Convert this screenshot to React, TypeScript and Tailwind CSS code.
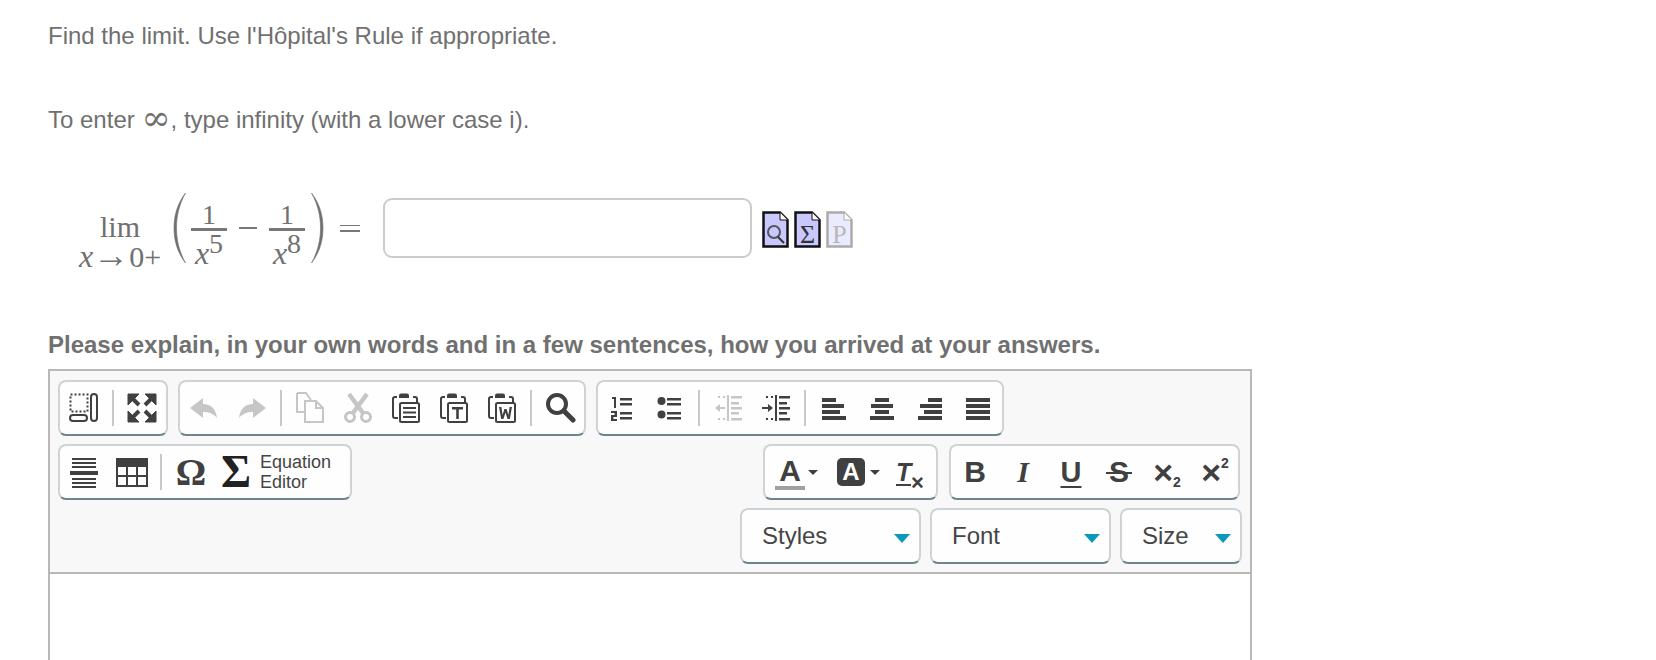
import { ReactNode } from "react";

const DARK = "#404040";
const OFF = "#c6c6c6";

const Svg = ({ children, w = 32, h = 32 }: { children: ReactNode; w?: number; h?: number }) => (
  <svg width={w} height={h} viewBox={`0 0 ${w} ${h}`} className="block">
    {children}
  </svg>
);

const Btn = ({ children }: { children: ReactNode }) => (
  <div className="flex h-full w-12 shrink-0 items-center justify-center">{children}</div>
);

const Sep = () => <div className="mx-1 h-9 w-0.5 shrink-0 bg-[#c8c8c8]" />;

const Group = ({ children, className = "" }: { children: ReactNode; className?: string }) => (
  <div
    className={
      "flex h-[56px] items-center rounded-lg border-2 border-[#cdd3d6] border-b-[#6e848c] bg-[#fefefe] " + className
    }
  >
    {children}
  </div>
);

const Combo = ({ label, width }: { label: string; width: string }) => (
  <div
    className={
      "relative flex h-[56px] items-center rounded-lg border-2 border-[#cdd3d6] border-b-[#6e848c] bg-[#fefefe] pl-[20px] text-[24px] text-[#454545] " +
      width
    }
  >
    {label}
    <div className="absolute right-[9px] top-[24px] h-0 w-0 border-x-[8px] border-t-[9px] border-x-transparent border-t-[#0d98ba]" />
  </div>
);

const ShowSource = () => (
  <Svg>
    <rect x="2.500" y="2.500" width="17" height="17" fill="none" stroke={DARK} strokeWidth="2" strokeDasharray="2 2" />
    <rect x="23" y="2" width="6" height="27" rx="3" fill="none" stroke={DARK} strokeWidth="2" />
    <rect x="2" y="23" width="17" height="6" rx="3" fill="none" stroke={DARK} strokeWidth="2" />
  </Svg>
);

const Maximize = () => (
  <Svg>
    <g fill={DARK} stroke={DARK}>
      <path d="M2 2h11L2 13z" />
      <path d="M30 2H19l11 11z" />
      <path d="M2 30h11L2 19z" />
      <path d="M30 30H19l11-11z" />
    </g>
    <g stroke={DARK} strokeWidth="4">
      <path d="M6 6l7 7M26 6l-7 7M6 26l7-7M26 26l-7-7" />
    </g>
  </Svg>
);

const Undo = ({ flip }: { flip?: boolean }) => (
  <Svg>
    <path
      d="M2 16 L15 6 V12 C23 12 28 17 29 26 C25 21 20 20 15 20 V26 Z"
      fill={OFF}
      transform={flip ? "matrix(-1 0 0 1 32 0)" : undefined}
    />
  </Svg>
);

const Copy = () => (
  <Svg>
    <path d="M3 1h9l5 7M3 1v19h8" fill="none" stroke={OFF} strokeWidth="2" />
    <path d="M11 9h11l7 7v14H11zM22 9v7h7" fill="none" stroke={OFF} strokeWidth="2" />
  </Svg>
);

const Cut = () => (
  <Svg>
    <circle cx="8" cy="25" r="4.500" fill="none" stroke={OFF} strokeWidth="3" />
    <circle cx="24" cy="25" r="4.500" fill="none" stroke={OFF} strokeWidth="3" />
    <path d="M7 2 L21 21 M25 2 L11 21" stroke={OFF} strokeWidth="4.500" />
  </Svg>
);

const Clipboard = ({ children }: { children?: ReactNode }) => (
  <Svg>
    <path d="M7 5H5a2 2 0 0 0-2 2v17a2 2 0 0 0 2 2h3M23 5h2a2 2 0 0 1 2 2v3" fill="none" stroke={DARK} strokeWidth="2" />
    <path d="M9 6V3.500a2 2 0 0 1 2-2h6a2 2 0 0 1 2 2V6z" fill={DARK} />
    <rect x="10" y="11" width="19" height="19" rx="1.500" fill="#fefefe" stroke={DARK} strokeWidth="2" />
    {children}
  </Svg>
);

const PasteIcon = () => (
  <Clipboard>
    <path d="M13 15h13v2H13zM13 19.500h13v2H13zM13 24h13v2H13z" fill={DARK} />
  </Clipboard>
);

const PasteText = () => (
  <Clipboard>
    <path d="M14 15h11v2.600h-4.200V27h-2.600v-9.400H14z" fill={DARK} />
  </Clipboard>
);

const PasteWord = () => (
  <Clipboard>
    <path d="M13 15h2.400l1.200 8 1.800-6h2.200l1.800 6 1.200-8H26l-2.200 12h-2.200l-2.100-6.500-2.100 6.500h-2.200z" fill={DARK} />
  </Clipboard>
);

const Find = () => (
  <Svg>
    <circle cx="13" cy="12" r="9" fill="none" stroke={DARK} strokeWidth="4" />
    <path d="M20 19l9 9" stroke={DARK} strokeWidth="5" strokeLinecap="round" />
  </Svg>
);

const Numbered = () => (
  <Svg>
    <path d="M6 5h4v11H8V7H6zM5 19h6v6H7.400v2H11v2H5v-6h3.600v-2H5z" fill={DARK} />
    <path d="M14 6h12v2.500H14zM14 11h12v2.500H14zM14 20h12v2.500H14zM14 25h12v2.500H14z" fill={DARK} />
  </Svg>
);

const Bullets = () => (
  <Svg>
    <circle cx="7.500" cy="9" r="4" fill={DARK} />
    <circle cx="7.500" cy="22.500" r="4" fill={DARK} />
    <path d="M13 6h14v2.500H13zM13 11h14v2.500H13zM13 20h14v2.500H13zM13 25h14v2.500H13z" fill={DARK} />
  </Svg>
);

const Indent = ({ color, out }: { color: string; out?: boolean }) => (
  <Svg>
    <rect x="15" y="3" width="2" height="26" fill={color} />
    <path d="M19 4h11v2.400H19zM19 10h8v2.400H19zM19 15h11v2.400H19zM19 20h8v2.400H19zM19 26h11v2.400H19z" fill={color} />
    <path d="M6 4h2v2H6zM11 4h2v2h-2zM6 26h2v2H6zM11 26h2v2h-2z" fill={color} />
    {out ? (
      <path d="M3 16l5-4v3h5v2H8v3z" fill={color} />
    ) : (
      <path d="M13 16l-5-4v3H2v2h6v3z" fill={color} />
    )}
  </Svg>
);

const Align = ({ bars }: { bars: [number, number][] }) => (
  <Svg>
    {bars.map(([x, w], i) => (
      <rect key={i} x={x} y={6 + i * 6} width={w} height="4" fill={DARK} />
    ))}
  </Svg>
);

const HLine = () => (
  <Svg>
    <path d="M4 2h24v2H4zM4 6h24v2H4zM4 10h24v2H4zM2 15h28v4H2zM4 22h24v2H4zM4 26h24v2H4zM4 30h24v2H4z" fill={DARK} />
  </Svg>
);

const TableIcon = () => (
  <Svg>
    <rect x="1" y="3" width="30" height="27" fill="none" stroke={DARK} strokeWidth="2" />
    <rect x="1" y="3" width="30" height="8" fill={DARK} />
    <path d="M11 10v20M21 10v20M1 20h30" stroke={DARK} strokeWidth="2" />
  </Svg>
);

const Glyph = ({ children, className }: { children: ReactNode; className: string }) => (
  <span className={"leading-none text-[#404040] font-['Liberation_Sans',sans-serif] " + className}>{children}</span>
);

const Caret = () => <div className="h-0 w-0 border-x-[5px] border-t-[5px] border-x-transparent border-t-[#404040]" />;

const FileIcon = ({ faded, children }: { faded?: boolean; children: ReactNode }) => (
  <svg width="27" height="37" viewBox="0 0 27 37" className={"block" + (faded ? " opacity-35" : "")}>
    <path d="M1.500 1.500H18L25.500 9V35.500H1.500z" fill="#c8c8ff" stroke="#111" strokeWidth="2.500" />
    <path d="M18 1.500V9H25.500" fill="#fff" stroke="#111" strokeWidth="1" />
    {children}
  </svg>
);

const Paren = ({ flip }: { flip?: boolean }) => (
  <svg width="16" height="72" viewBox="0 0 16 72" className={"block" + (flip ? " -scale-x-100" : "")}>
    <path d="M14.500 1C6 12 3 24 3 36s3 24 11.500 35C8 59 5.500 48 5.500 36S8 13 14.500 1z" fill="#707070" stroke="#707070" strokeWidth="0.600" />
  </svg>
);

const Frac = ({ sup }: { sup: string }) => (
  <div className="flex w-9 flex-col items-center pt-[12px]">
    <div className="h-[28px] text-[28px] leading-[30px]">1</div>
    <div className="mb-[4px] h-[3px] w-full bg-[#777]" />
    <div className="h-[34px] whitespace-nowrap leading-[36px]">
      <i className="text-[32px]">x</i>
      <span className="relative -top-[11px] text-[28px]">{sup}</span>
    </div>
  </div>
);

export default function App() {
  return (
    <div className="h-screen overflow-hidden bg-white pl-12 text-[#707070] font-['Liberation_Sans',sans-serif]">
      <p className="pt-[22px] text-[24px] leading-[28px]">Find the limit. Use l'Hôpital's Rule if appropriate.</p>
      <p className="mt-[56px] h-[28px] text-[24px] leading-[28px]">
        To enter{" "}
        <span className="relative top-[2px] font-['DejaVu_Serif',serif] text-[35px] leading-[20px]">∞</span>, type infinity (with a lower case i).
      </p>
      <div className="mt-[54px] flex h-[80px] items-center font-['Liberation_Serif',serif]">
        <div className="ml-[31px] flex w-[82px] flex-col items-center pt-[20px] text-[30px] leading-[26px]">
          <div className="h-[26px]">lim</div>
          <div className="-mt-[3px] h-[26px] whitespace-nowrap">
            <i className="text-[32px]">x</i>
            <span className="text-[36px] leading-none">→</span>0+
          </div>
        </div>
        <div className="ml-[10px]">
          <Paren />
        </div>
        <div className="ml-[4px]">
          <Frac sup="5" />
        </div>
        <div className="mx-[12px] h-[1.500px] w-[18px] bg-[#777]" />
        <Frac sup="8" />
        <div className="ml-[5px]">
          <Paren flip />
        </div>
        <div className="ml-[14px] flex w-[20px] flex-col gap-[4px]">
          <div className="h-[1.500px] bg-[#777]" />
          <div className="h-[1.500px] bg-[#777]" />
        </div>
        <div className="ml-[23px] h-[60px] w-[369px] rounded-[9px] border-2 border-[#cccccc]" />
        <div className="ml-[10px] flex gap-[5px] pt-[3px]">
          <FileIcon>
            <circle cx="12" cy="21" r="6" fill="none" stroke="#555" strokeWidth="2" />
            <path d="M16 26l6 6" stroke="#333" strokeWidth="2" />
          </FileIcon>
          <FileIcon>
            <text x="13.500" y="32" textAnchor="middle" fontSize="26" fill="#333" fontFamily="Liberation Serif, serif">Σ</text>
          </FileIcon>
          <FileIcon faded>
            <text x="13.500" y="32" textAnchor="middle" fontSize="26" fill="#333" fontFamily="Liberation Serif, serif">P</text>
          </FileIcon>
        </div>
      </div>
      <p className="mt-[63px] text-[24px] font-bold leading-[28px]">
        Please explain, in your own words and in a few sentences, how you arrived at your answers.
      </p>
      <div className="mt-[10px] h-[500px] w-[1204px] border-2 border-[#b8b8b8]">
        <div className="border-b-2 border-[#b8b8b8] bg-[#f8f8f8] pb-[8px] pt-[9px]">
          <div className="flex gap-[10px] pl-[8px]">
            <Group>
              <Btn><ShowSource /></Btn>
              <Sep />
              <Btn><Maximize /></Btn>
            </Group>
            <Group>
              <Btn><Undo /></Btn>
              <Btn><Undo flip /></Btn>
              <Sep />
              <Btn><Copy /></Btn>
              <Btn><Cut /></Btn>
              <Btn><PasteIcon /></Btn>
              <Btn><PasteText /></Btn>
              <Btn><PasteWord /></Btn>
              <Sep />
              <Btn><Find /></Btn>
            </Group>
            <Group>
              <Btn><Numbered /></Btn>
              <Btn><Bullets /></Btn>
              <Sep />
              <Btn><Indent color={OFF} out /></Btn>
              <Btn><Indent color={DARK} /></Btn>
              <Sep />
              <Btn><Align bars={[[4, 14], [4, 22], [4, 18], [4, 24]]} /></Btn>
              <Btn><Align bars={[[9, 14], [5, 22], [9, 14], [4, 24]]} /></Btn>
              <Btn><Align bars={[[14, 14], [6, 22], [10, 18], [4, 24]]} /></Btn>
              <Btn><Align bars={[[4, 24], [4, 24], [4, 24], [4, 24]]} /></Btn>
            </Group>
          </div>
          <div className="mt-[8px] flex justify-between pl-[8px] pr-[10px]">
            <Group className="w-[294px]">
              <Btn><HLine /></Btn>
              <Btn><TableIcon /></Btn>
              <Sep />
              <div className="ml-[1px]">
                <Btn><span className="font-['Liberation_Serif',serif] text-[38px] font-bold leading-none text-[#404040]">Ω</span></Btn>
              </div>
              <div className="flex w-[42px] justify-center">
                <span className="font-['Liberation_Serif',serif] text-[46px] font-bold leading-none text-[#222]">Σ</span>
              </div>
              <div className="ml-[3px] text-[18px] leading-[20px] text-[#454545]">
                Equation
                <br />
                Editor
              </div>
            </Group>
            <div className="flex gap-[11px]">
              <Group className="w-[175px] pl-[7px]">
                <div className="relative flex w-[36px] justify-center">
                  <Glyph className="-mt-[3px] text-[30px] font-bold">A</Glyph>
                  <div className="absolute -bottom-[4px] left-[3px] h-1 w-[30px] bg-[#a0a0a0]" />
                </div>
                <div className="ml-0"><Caret /></div>
                <div className="ml-[19px] flex h-[28px] w-[28px] items-center justify-center rounded-[5px] bg-[#404040]">
                  <span className="text-[24px] font-bold leading-none text-white">A</span>
                </div>
                <div className="ml-[5px]"><Caret /></div>
                <div className="relative ml-[16px] w-[24px]">
                  <Glyph className="block text-[25px] font-bold italic">T</Glyph>
                  <div className="absolute -bottom-[1px] left-0 h-0.5 w-[15px] bg-[#404040]" />
                  <span className="absolute -bottom-[9px] left-[15px] text-[22px] font-bold leading-none text-[#404040]">×</span>
                </div>
              </Group>
              <Group className="w-[291px]">
                <Btn><Glyph className="text-[30px] font-bold">B</Glyph></Btn>
                <Btn>
                  <span className="font-['Liberation_Serif',serif] text-[30px] font-bold italic leading-none text-[#404040]">I</span>
                </Btn>
                <Btn>
                  <Glyph className="text-[29px] font-bold underline decoration-2 underline-offset-[4px]">U</Glyph>
                </Btn>
                <Btn>
                  <div className="relative flex w-[26px] justify-center">
                    <Glyph className="text-[30px] font-bold">S</Glyph>
                    <div className="absolute left-0 top-[15px] h-0.5 w-[26px] bg-[#404040]" />
                  </div>
                </Btn>
                <Btn>
                  <Glyph className="text-[34px] font-bold">×</Glyph>
                  <span className="relative top-[10px] text-[14px] font-bold leading-none text-[#404040]">2</span>
                </Btn>
                <Btn>
                  <Glyph className="text-[34px] font-bold">×</Glyph>
                  <span className="relative -top-[9px] text-[14px] font-bold leading-none text-[#404040]">2</span>
                </Btn>
              </Group>
            </div>
          </div>
          <div className="mt-[8px] flex justify-end gap-[9px] pr-[8px]">
            <Combo label="Styles" width="w-[181px]" />
            <Combo label="Font" width="w-[181px]" />
            <Combo label="Size" width="w-[122px]" />
          </div>
        </div>
        <div className="h-full bg-white" />
      </div>
    </div>
  );
}
